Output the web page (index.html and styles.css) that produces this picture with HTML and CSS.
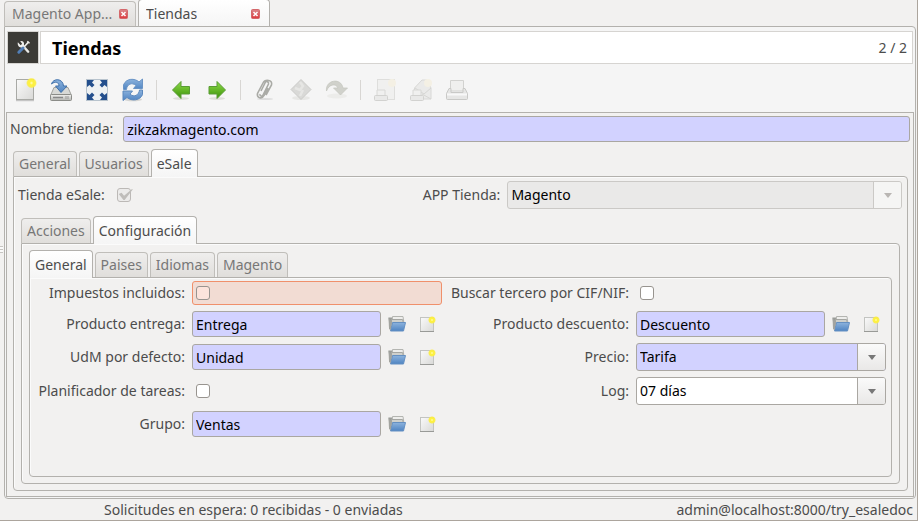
FILE: index.html
```html
<!DOCTYPE html>
<html lang="es">
<head>
<meta charset="utf-8">
<meta name="viewport" content="width=device-width, initial-scale=1">
<title>Tiendas</title>
<link rel="stylesheet" href="styles.css">
</head>
<body>
<svg class="defs" aria-hidden="true">
  <defs>
    <linearGradient id="paper" x1="0" y1="0" x2="1" y2="1"><stop offset="0" stop-color="#fafafa"/><stop offset="1" stop-color="#d9d9d7"/></linearGradient>
    <radialGradient id="glow"><stop offset="0" stop-color="#fffcc0"/><stop offset=".35" stop-color="#fff23c"/><stop offset=".75" stop-color="#fbee3f" stop-opacity=".9"/><stop offset="1" stop-color="#fce94f" stop-opacity="0"/></radialGradient>
    <linearGradient id="blue" x1="0" y1="0" x2="0" y2="1"><stop offset="0" stop-color="#8db3dd"/><stop offset="1" stop-color="#4f84c2"/></linearGradient>
    <linearGradient id="green" x1="0" y1="0" x2="0" y2="1"><stop offset="0" stop-color="#8fdb4a"/><stop offset="1" stop-color="#3a9206"/></linearGradient>
    <linearGradient id="metal" x1="0" y1="0" x2="0" y2="1"><stop offset="0" stop-color="#f2f2f0"/><stop offset="1" stop-color="#b4b5b1"/></linearGradient>
    <linearGradient id="red" x1="0" y1="0" x2="0" y2="1"><stop offset="0" stop-color="#d9868a"/><stop offset="1" stop-color="#dc3a3e"/></linearGradient>
    <symbol id="new" viewBox="0 0 24 24"><path d="M3 22.7h18" stroke="#bbb" stroke-width="1"/><rect x="3.5" y="1.5" width="17" height="20" fill="url(#paper)" stroke="#a9aaa6"/><circle cx="18.5" cy="5" r="5.5" fill="url(#glow)"/></symbol>
    <symbol id="new-small" viewBox="0 0 18 18"><rect x="1.5" y="2.5" width="13" height="14" fill="url(#paper)" stroke="#c3c4c1"/><path d="M1 16.5h14" stroke="#999a97"/><circle cx="13" cy="5" r="4" fill="url(#glow)"/></symbol>
    <symbol id="folder" viewBox="0 0 20 18"><path d="M1.5 2.5h4l1 2h10v4H5L3 15.500z" fill="#9a9c98"/><path d="M5.5 1.5h10.500l1 7H5z" fill="#eeeeec" stroke="#b4b5b1"/><path d="M4.500 4.500h11l1 4h-12z" fill="#cfd0cc" stroke="#a5a6a2"/><path d="M5.500 7.500h13l-2 8.500H3.500z" fill="url(#blue)" stroke="#6590c2"/><path d="M1.500 2.500l.5 11 1.500 2 1.500-8.500" fill="#a3a4a0"/></symbol>
    <symbol id="close" viewBox="0 0 9 10"><rect x=".5" y=".5" width="8" height="9" rx="1" fill="url(#red)" stroke="#d4686b"/><path d="M2.500 3l4 4m0-4l-4 4" stroke="#fff" stroke-width="1.500"/></symbol>
  </defs>
</svg>
<div class="window">
  <nav class="tabs tabs-main">
    <div class="tab doc-tab"><button type="button" class="tab-name">Magento App</button><span>...</span><button type="button" class="close" aria-label="Cerrar Magento App"><svg><use href="#close"/></svg></button></div>
    <div class="tab doc-tab active"><button type="button" class="tab-name">Tiendas</button><button type="button" class="close" aria-label="Cerrar Tiendas"><svg><use href="#close"/></svg></button></div>
  </nav>
  <div class="workspace">
    <span class="grip"></span>
    <main class="page">
      <header class="title-row">
        <button type="button" class="tools" aria-label="Herramientas"><svg viewBox="0 0 16 16"><path d="M8.500 7.500L13 12.500" stroke="#e9e9e7" stroke-width="2.600" stroke-linecap="round"/><path d="M2 2.500l3 3 1.500-1.500-2-2.700c3-.6 4.500 1.200 4 3.700l1 2-2 2-2.200-1C3 8 1.200 5 2 2.500z" fill="#eeeeec"/><path d="M13.500 2L8 8" stroke="#eeeeec" stroke-width="1.700"/><path d="M12 1.500l2.500 2" stroke="#eeeeec" stroke-width="1.500"/><path d="M7.500 8.500L3 13" stroke="#527fb7" stroke-width="3.200" stroke-linecap="round"/></svg></button>
        <div class="title-box"><h1>Tiendas</h1><span>2 / 2</span></div>
      </header>
      <div class="toolbar" role="toolbar">
        <button type="button" aria-label="Nuevo"><svg viewBox="0 0 24 24"><use href="#new"/></svg></button>
        <button type="button" aria-label="Guardar"><svg viewBox="0 0 24 24"><path d="M5 9.500h14l3.500 8H1.500z" fill="#d8d9d6" stroke="#a0a19d"/><rect x="1.500" y="16.500" width="21" height="6" rx="1" fill="url(#metal)" stroke="#8b8c88"/><path d="M4 19.500h10" stroke="#888" stroke-width="1.500"/><path d="M17 18v3m2-3v3" stroke="#999"/><path d="M2.500 6C4 0 14 0 14.500 8H18l-6 6.500L6.500 8h3.500C10 4 6 3 2.500 6z" fill="url(#blue)" stroke="#3f70aa"/></svg></button>
        <button type="button" aria-label="Pantalla completa"><svg viewBox="0 0 24 24"><rect x="1.500" y="1.500" width="21" height="21" fill="#edf1f3" stroke="#b8c3cd"/><path d="M2 2h7L7 4.500 9.500 7 7 9.500 4.500 7 2 9zM22 2v7l-2.500-2L17 9.500 14.500 7 17 4.500 15 2zM2 22v-7l2.500 2L7 14.500 9.500 17 7 19.500 9 22zM22 22h-7l2-2.500-2.500-2.500 2.500-2.500 2.500 2.500 2.500-2z" fill="#234f8d"/></svg></button>
        <button type="button" aria-label="Recargar"><svg viewBox="0 0 24 24"><ellipse cx="12" cy="21.500" rx="9" ry="1.700" fill="#d5d5d3"/><path d="M2.500 11.500V7C5 0 14 0 18 4l3.500-3v9.500h-9L15 7.500C11 4 6 6 5.500 11.500z" fill="url(#blue)" stroke="#6a94c6"/><path d="M21.500 12v4.500c-2 6-11 7-15.500 3l-4 3V13h9.500L9 16c4 4 9 1 9.500-4z" fill="url(#blue)" stroke="#5b88bd"/></svg></button>
        <i class="sep"></i>
        <button type="button" aria-label="Anterior"><svg viewBox="0 0 24 24"><ellipse cx="12" cy="20.500" rx="8" ry="1.500" fill="#deded9"/><path d="M3.500 12L12 3.500v5h8.500v7.500H12v4.500z" fill="url(#green)" stroke="#5a9c35"/></svg></button>
        <button type="button" aria-label="Siguiente"><svg viewBox="0 0 24 24"><ellipse cx="12" cy="20.500" rx="8" ry="1.500" fill="#deded9"/><path d="M20.500 12L12 3.500v5H4v7.500h8v4.500z" fill="url(#green)" stroke="#5a9c35"/></svg></button>
        <i class="sep"></i>
        <button type="button" aria-label="Adjuntos"><svg viewBox="0 0 24 24"><ellipse cx="12" cy="21" rx="8" ry="1" fill="#ddd"/><path d="M8 13l4-8c1-2.500 4-1.500 3.500 1L10 17c-1 2-3.500 1-3-1M15 10l-4 7.500c-2 4-7.500 2.500-6.500-2L10 5c2-4 10-3.500 8.500 2L13 17" fill="none" stroke="#aaaba6" stroke-width="1.600"/></svg></button>
        <button type="button" aria-label="Acción" disabled><svg viewBox="0 0 24 24"><ellipse cx="12" cy="20" rx="9" ry="2" fill="#e7e7e5"/><path d="M12 1.500l10 10-10 10-10-10z" fill="#d9d9d7" stroke="#cbcbc9"/><path d="M11 4l3 4-3 4-5-2M14 12l-3 6" fill="none" stroke="#e6e6e4" stroke-width="2.500"/></svg></button>
        <button type="button" aria-label="Relacionado" disabled><svg viewBox="0 0 24 24"><ellipse cx="12" cy="18" rx="10" ry="2.500" fill="#ececea"/><path d="M1.500 13C0 2 16-1 18 10h4.500l-7 7-7-7H13C11 5 4 6 1.500 13z" fill="#d0d1cb" stroke="#c4c5bf" stroke-width=".7"/></svg></button>
        <i class="sep"></i>
        <button type="button" aria-label="Informe" disabled><svg viewBox="0 0 24 24"><rect x="4.500" y="1.500" width="17" height="20" fill="#f0f0ef" stroke="#dededc"/><circle cx="19" cy="5" r="4" fill="#f4f0e4"/><path d="M4 12h8v6H4z" fill="#f0f0ef" stroke="#d8d8d6"/><rect x="1.500" y="17.500" width="13" height="5" rx="1" fill="#e9e9e8" stroke="#d2d2d0"/></svg></button>
        <button type="button" aria-label="Correo" disabled><svg viewBox="0 0 24 24"><path d="M5.500 10L13 2h5l4 8v11H5.500z" fill="#eaeae9" stroke="#d8d8d6"/><path d="M6 10l9 6 7-6M13 16l9 5" fill="none" stroke="#d6d6d4"/><circle cx="19" cy="5" r="4" fill="#f4f0e4"/><path d="M4 12h8v6H4z" fill="#f0f0ef" stroke="#d8d8d6"/><rect x="1.500" y="17.500" width="13" height="5" rx="1" fill="#e9e9e8" stroke="#d2d2d0"/></svg></button>
        <button type="button" aria-label="Imprimir" disabled><svg viewBox="0 0 24 24"><path d="M5.500 2.500h13V13h-13z" fill="#efefee" stroke="#d2d2d0"/><path d="M4 10.500h2v4h12v-4h2l2.500 5v5q0 1-1 1h-19q-1 0-1-1v-5z" fill="#e6e6e5" stroke="#c9c9c7"/><path d="M2 16.500h20" stroke="#f8f8f8" stroke-width="2"/></svg></button>
      </div>
      <form class="sheet">
        <div class="name-row"><label for="nombre">Nombre tienda:</label><input id="nombre" class="entry required" type="text" value="zikzakmagento.com"></div>
        <div class="tabs">
          <button type="button" class="tab">General</button><button type="button" class="tab">Usuarios</button><button type="button" class="tab active">eSale</button>
        </div>
        <section class="panel">
          <div class="sale-row">
            <label for="esale">Tienda eSale:</label>
            <input id="esale" class="check" type="checkbox" checked disabled>
            <label for="app">APP Tienda:</label>
            <div class="combo disabled"><select id="app" disabled><option>Magento</option></select></div>
          </div>
          <div class="tabs">
            <button type="button" class="tab">Acciones</button><button type="button" class="tab active">Configuración</button>
          </div>
          <section class="panel nested">
            <div class="tabs">
              <button type="button" class="tab active">General</button><button type="button" class="tab">Paises</button><button type="button" class="tab">Idiomas</button><button type="button" class="tab">Magento</button>
            </div>
            <section class="panel fields">
              <label for="imp">Impuestos incluidos:</label>
              <div class="check-box focus"><input id="imp" class="check" type="checkbox"></div>
              <label for="cif">Buscar tercero por CIF/NIF:</label>
              <div class="check-box"><input id="cif" class="check" type="checkbox"></div>

              <label for="ent">Producto entrega:</label>
              <div class="lookup"><input id="ent" class="entry required" type="text" value="Entrega"><button type="button" aria-label="Abrir"><svg class="folder"><use href="#folder"/></svg></button><button type="button" aria-label="Crear"><svg><use href="#new-small"/></svg></button></div>
              <label for="des">Producto descuento:</label>
              <div class="lookup"><input id="des" class="entry required" type="text" value="Descuento"><button type="button" aria-label="Abrir"><svg class="folder"><use href="#folder"/></svg></button><button type="button" aria-label="Crear"><svg><use href="#new-small"/></svg></button></div>

              <label for="udm">UdM por defecto:</label>
              <div class="lookup"><input id="udm" class="entry required" type="text" value="Unidad"><button type="button" aria-label="Abrir"><svg class="folder"><use href="#folder"/></svg></button><button type="button" aria-label="Crear"><svg><use href="#new-small"/></svg></button></div>
              <label for="precio">Precio:</label>
              <div class="combo required"><select id="precio"><option>Tarifa</option></select></div>

              <label for="plan">Planificador de tareas:</label>
              <div class="check-box"><input id="plan" class="check" type="checkbox"></div>
              <label for="log">Log:</label>
              <div class="combo"><select id="log"><option>07 días</option></select></div>

              <label for="grupo">Grupo:</label>
              <div class="lookup"><input id="grupo" class="entry required" type="text" value="Ventas"><button type="button" aria-label="Abrir"><svg class="folder"><use href="#folder"/></svg></button><button type="button" aria-label="Crear"><svg><use href="#new-small"/></svg></button></div>
            </section>
          </section>
        </section>
      </form>
    </main>
  </div>
  <footer class="status"><span>Solicitudes en espera: 0 recibidas - 0 enviadas</span><span>admin@localhost:8000/try_esaledoc</span></footer>
</div>
</body>
</html>
```
FILE: styles.css
```css
:root {
  --bg: #f2f1f0;
  --line: #b3b1ad;
  --text: #4c4c4c;
  --required: #d2d2ff;
}
* { box-sizing: border-box; }
body {
  margin: 0;
  background: var(--bg);
  color: var(--text);
  font: 14px/20px "Noto Sans", sans-serif;
}
button, input, select { font: inherit; color: inherit; margin: 0; }
button { padding: 0; border: 0; background: none; }
svg { display: block; }
.defs { position: absolute; width: 0; height: 0; }

.window {
  display: flex;
  flex-direction: column;
  min-height: 100vh;
  border-right: 1px solid #aca59d;
  border-bottom: 1px solid #aca59d;
}

/* Tabs */
.tabs { display: flex; align-items: flex-end; gap: 2px; }
.tab {
  height: 25px;
  padding: 0 5px;
  border: 1px solid #c0beba;
  border-bottom: 0;
  border-radius: 4px 4px 0 0;
  background: linear-gradient(#efeeed, #e0dedb);
  color: #777;
  white-space: nowrap;
}
.tab.active {
  position: relative;
  height: 28px;
  margin-bottom: -1px;
  border-color: var(--line);
  background: linear-gradient(#fff, #f5f5f5);
  color: var(--text);
}
.tabs-main { height: 26px; padding-left: 4px; }
.doc-tab {
  display: flex;
  align-items: center;
  width: 132px;
  padding: 0 7px;
}
.tab-name { overflow: hidden; white-space: nowrap; }
.doc-tab span { margin-right: 6px; }
.doc-tab .close { flex: none; margin-left: auto; }
.close svg { width: 9px; height: 10px; }
.doc-tab.active { padding-right: 9px; }

/* Page frame */
.workspace { position: relative; flex: 1; display: flex; padding: 0 1px 0 4px; }
.grip {
  position: absolute;
  left: 0;
  top: 220px;
  width: 3px;
  height: 7px;
  background: repeating-linear-gradient(#c6c4c1 0 1px, #fafafa 1px 3px);
}
.page {
  flex: 1;
  display: flex;
  flex-direction: column;
  padding: 4px 1px 1px;
  border: 1px solid var(--line);
  border-radius: 0 4px 4px 4px;
  background: #f5f5f5;
}
.title-row { display: flex; gap: 1px; padding: 0 1px; }
.tools {
  display: grid;
  place-items: center;
  width: 32px;
  height: 33px;
  border: 1px solid #d6d4d1;
  background: #3c3b37;
}
.tools svg { width: 15px; height: 15px; }
.title-box {
  flex: 1;
  display: flex;
  align-items: center;
  justify-content: space-between;
  padding: 0 5px 0 11px;
  border: 1px solid #d6d4d1;
  background: #fff;
}
h1 { margin: 0; color: #000; font-size: 18px; line-height: 24px; }

.toolbar { display: flex; align-items: center; height: 48px; padding: 4px 7px 0; gap: 12px; }
.toolbar svg { width: 24px; height: 24px; }
.sep { width: 1px; height: 20px; margin-left: -1px; background: #d8d6d3; }

/* Form */
.sheet {
  flex: 1;
  display: flex;
  flex-direction: column;
  padding: 3px 5px 5px 6px;
  border: 1px solid var(--line);
  background: var(--bg);
}
.name-row { display: flex; align-items: center; gap: 10px; margin: 0 -2px 7px -3px; }
.panel {
  flex: 1;
  display: flex;
  flex-direction: column;
  padding: 4px 7px 6px;
  border: 1px solid var(--line);
  border-radius: 0 4px 4px 4px;
  box-shadow: inset 1px 1px #fbfbfb;
}
.panel.nested { padding-top: 6px; }
.entry {
  flex: 1;
  min-width: 0;
  width: 100%;
  height: 26px;
  padding: 0 3px;
  border: 1px solid #aaa7a2;
  border-radius: 3px;
  background: #fff;
  color: #000;
}
.entry.required { background: var(--required); }
.combo { position: relative; height: 28px; }
.combo select {
  width: 100%;
  height: 100%;
  padding: 0 30px 0 3px;
  appearance: none;
  border: 1px solid #aaa7a2;
  border-radius: 3px;
  background: #fff;
  color: #000;
  opacity: 1;
}
.combo.required select { background: var(--required); }
.combo::after {
  content: "";
  position: absolute;
  inset: 1px 1px 1px auto;
  width: 27px;
  border-left: 1px solid #aaa7a2;
  border-radius: 0 2px 2px 0;
  background: linear-gradient(#fafafa, #e9e8e7);
  pointer-events: none;
}
.combo::before {
  content: "";
  position: absolute;
  z-index: 1;
  right: 10px;
  top: 12px;
  border: 4px solid transparent;
  border-top: 5px solid #777;
  border-bottom: 0;
  pointer-events: none;
}
.combo.disabled select { border-color: #cbc9c6; background: #eae9e8; }
.combo.disabled::after { border-color: #cbc9c6; background: #f5f5f4; }
.combo.disabled::before { border-top-color: #b9b6b3; }

.check {
  position: relative;
  width: 14px;
  height: 14px;
  appearance: none;
  border: 1px solid #98948f;
  border-radius: 3px;
  background: #fff;
}
.check:disabled { border-color: #bcb9b6; background: #ecebea; }
.check:checked::after {
  content: "";
  position: absolute;
  inset: 0 -3px 1px 1px;
  background: #bfbdba;
  clip-path: polygon(0 45%, 20% 35%, 38% 62%, 95% 0, 100% 5%, 42% 100%, 34% 100%);
}
.sale-row {
  display: grid;
  grid-template-columns: auto 305fr auto 396fr;
  align-items: center;
  gap: 7px;
  margin: 0 -2px 7px -3px;
}
.sale-row .check { margin-left: 5px; }
.fields {
  display: grid;
  grid-template-columns: 154px 1fr 180px 1fr;
  grid-template-rows: 24px 26px 28px 28px 26px;
  align-items: center;
  gap: 6px 7px;
  padding: 3px 5px 37px 1px;
}
.fields label { text-align: right; white-space: nowrap; }
.check-box { display: flex; align-items: center; height: 24px; padding: 0 4px; }
.check-box.focus { padding: 0 3px; border: 1px solid #f0906b; border-radius: 3px; background: #f2dcd3; }
.focus .check { background: #fce4dc; }
.lookup { display: flex; align-items: center; }
.lookup button { margin-left: 6px; }
.lookup button + button { margin: 0 5px 0 12px; }
.lookup svg { width: 18px; height: 18px; }
.lookup .folder { width: 20px; }

.status { display: flex; justify-content: space-between; height: 21px; padding: 1px 4px 0 104px; white-space: nowrap; }
```
